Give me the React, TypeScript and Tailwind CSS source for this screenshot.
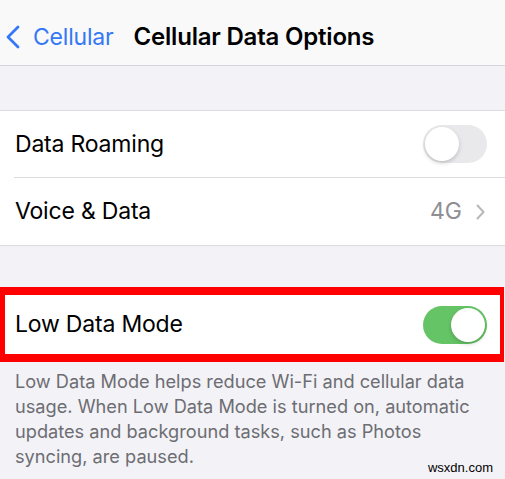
import React from "react";

function Toggle({ on }: { on: boolean }) {
  return (
    <div
      className={`relative w-[64px] h-[38px] rounded-full ${
        on ? "bg-[#65c466]" : "bg-[#e9e9eb]"
      }`}
    >
      <div
        className={`absolute top-[2px] w-[34px] h-[34px] rounded-full bg-white shadow-[0_2px_4px_rgba(0,0,0,0.18)] ${
          on ? "right-[2px]" : "left-[2px]"
        }`}
      />
    </div>
  );
}

export default function App() {
  return (
    <div
      className="min-h-screen bg-[#f2f2f7] text-black"
      style={{ fontFamily: "Inter, 'Noto Sans', sans-serif" }}
    >
      {/* nav bar */}
      <div className="h-[66px] bg-[#f9f9f9] border-b border-[#d6d6da] flex items-center pt-[9px]">
        <div className="flex items-center pl-[5px] text-[#3478f6]">
          <svg width="16" height="24" viewBox="0 0 16 24" fill="none">
            <path
              d="M13 2 L3 12 L13 22"
              stroke="currentColor"
              strokeWidth="2.8"
              strokeLinecap="round"
              strokeLinejoin="round"
            />
          </svg>
          <span className="ml-[12px] text-[23px] tracking-[-0.2px]">Cellular</span>
        </div>
        <span className="ml-[20px] text-[24px] font-semibold tracking-[-0.2px]">
          Cellular Data Options
        </span>
      </div>

      <div className="h-[44px]" />

      {/* group */}
      <div className="bg-white border-t border-b border-[#dcdce0]">
        <div className="h-[66px] flex items-center justify-between pl-[15px] pr-[18px]">
          <span className="text-[23px] tracking-[-0.2px]">Data Roaming</span>
          <Toggle on={false} />
        </div>
        <div className="ml-[14px] h-px bg-[#dcdce0]" />
        <div className="h-[67px] flex items-center justify-between pl-[15px] pr-[20px]">
          <span className="text-[23px] tracking-[-0.2px]">Voice &amp; Data</span>
          <div className="flex items-center text-[#8e8e93]">
            <span className="text-[23px]">4G</span>
            <svg className="ml-[14px]" width="9" height="16" viewBox="0 0 9 16" fill="none">
              <path
                d="M1.5 1.5 L7.5 8 L1.5 14.5"
                stroke="#b8b8bd"
                strokeWidth="2"
                strokeLinecap="round"
                strokeLinejoin="round"
              />
            </svg>
          </div>
        </div>
      </div>

      <div className="h-[41px]" />

      {/* highlighted row */}
      <div className="mr-[1px] bg-white border-t-8 border-b-8 border-l-[5px] border-r-[4px] border-[#ff0000]">
        <div className="h-[59px] flex items-center justify-between pl-[10px] pr-[13px]">
          <span className="text-[23px] tracking-[-0.2px]">Low Data Mode</span>
          <Toggle on={true} />
        </div>
      </div>

      {/* footer */}
      <div className="pl-[15px] pr-[20px] pt-[7px] text-[18.2px] leading-[25px] text-[#6d6d72]">
        <p>
          Low Data Mode helps reduce Wi-Fi and cellular data usage. When Low Data Mode is
          turned on, automatic updates and background tasks, such as Photos syncing, are
          paused.
        </p>
      </div>
      <div className="flex justify-end pr-[12px] -mt-[9px]">
        <span
          className="text-[13px] leading-[15px] text-black"
          style={{ fontFamily: "'Liberation Sans', Arial, sans-serif" }}
        >
          wsxdn.com
        </span>
      </div>
    </div>
  );
}
